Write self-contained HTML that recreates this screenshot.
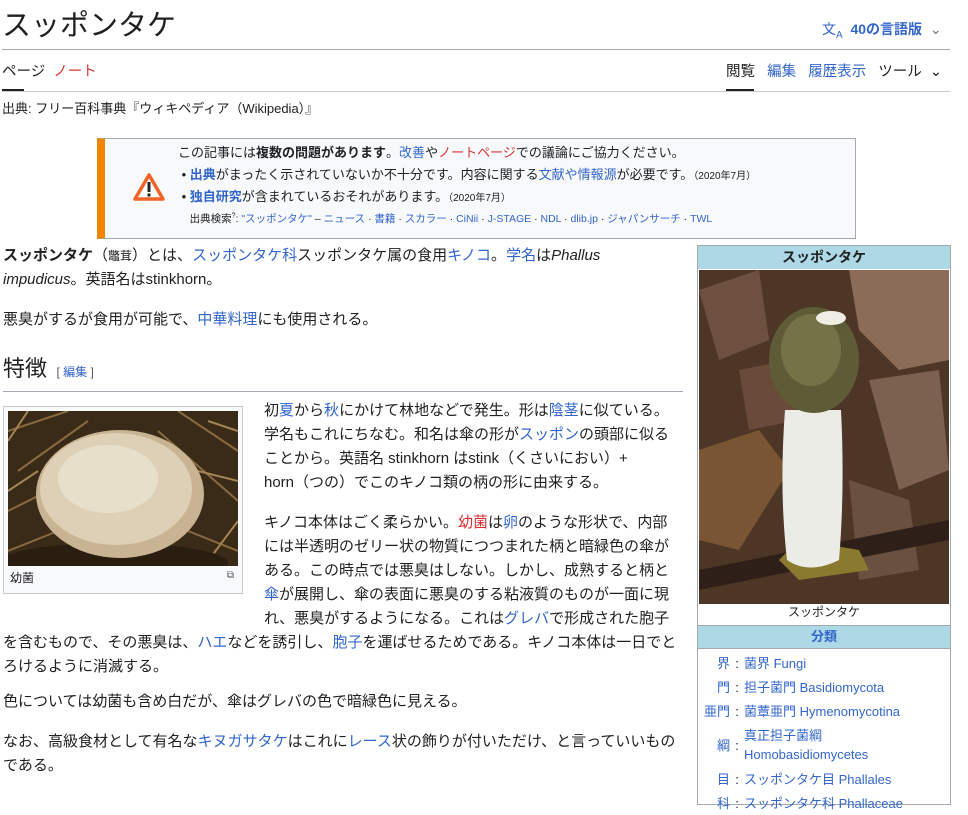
<!DOCTYPE html>
<html><head><meta charset="utf-8">
<style>
*{margin:0;padding:0;box-sizing:border-box}
body{width:968px;height:800px;overflow:hidden;background:#fff;color:#202122;font-family:"Liberation Sans","Noto Sans CJK JP",sans-serif;font-size:14px;position:relative}
a,.l{color:#3366cc;text-decoration:none}
.r{color:#d73333}
.abs{position:absolute}
.t{line-height:24px;font-size:15px;white-space:nowrap}
.ib td{font-size:13px}
.wl{height:22px;line-height:22px;white-space:nowrap}
</style></head><body>
<div class="abs" style="left:2px;top:6px;font-size:29px;line-height:40px;">スッポンタケ</div>
<div class="abs l" style="left:822px;top:19px;font-size:14px;font-weight:bold;line-height:20px;white-space:nowrap"><span style="font-weight:normal">文<sub style="font-size:10px">A</sub></span>&nbsp; 40の言語版 &nbsp;<span style="color:#72777d;font-weight:normal">⌄</span></div>
<div class="abs" style="left:2px;top:49px;width:948px;height:1px;background:#a2a9b1"></div>
<div class="abs" style="left:2px;top:62px;font-size:14.5px;line-height:20px">ページ &nbsp;<span class="r">ノート</span></div>
<div class="abs" style="left:2px;top:89px;width:22px;height:2px;background:#202122"></div>
<div class="abs" style="left:726px;top:62px;font-size:14.5px;line-height:20px;white-space:nowrap;word-spacing:0">閲覧&nbsp;&nbsp; <span class="l">編集</span>&nbsp;&nbsp; <span class="l">履歴表示</span>&nbsp;&nbsp; ツール&nbsp; <span>⌄</span></div>
<div class="abs" style="left:726px;top:89px;width:28px;height:2px;background:#202122"></div>
<div class="abs" style="left:2px;top:91px;width:948px;height:1px;background:#c8ccd1"></div>
<div class="abs" style="left:2px;top:100px;font-size:13px;line-height:18px">出典: フリー百科事典『ウィキペディア（Wikipedia）』</div>

<div class="abs" style="left:97px;top:138px;width:759px;height:101px;background:#f8f9fa;border:1px solid #a2a9b1;border-left:8px solid #f28500">
<svg class="abs" style="left:27px;top:33px" width="34" height="30" viewBox="0 0 34 30"><path d="M17 3 L31 27 L3 27 Z" fill="#fff" stroke="#f0642a" stroke-width="3.5" stroke-linejoin="round"/><rect x="15.5" y="10" width="3" height="10" fill="#202122"/><rect x="15.5" y="21.5" width="3" height="3" fill="#202122"/></svg>
<div class="abs" style="left:73px;top:3px;font-size:13px">
<div class="wl">この記事には<b>複数の問題があります</b>。<a>改善</a>や<span class="r">ノートページ</span>での議論にご協力ください。</div>
<div class="wl">&nbsp;• <b class="l">出典</b>がまったく示されていないか不十分です。内容に関する<a>文献や情報源</a>が必要です。<small style="font-size:10px">（2020年7月）</small></div>
<div class="wl">&nbsp;• <b class="l">独自研究</b>が含まれているおそれがあります。<small style="font-size:10px">（2020年7月）</small></div>
<div class="wl" style="font-size:10.5px">&nbsp;&nbsp;&nbsp;&nbsp;出典検索<sup style="font-size:7px;line-height:0">?</sup>: <a>"スッポンタケ"</a> – <a>ニュース</a> · <a>書籍</a> · <a>スカラー</a> · <a>CiNii</a> · <a>J-STAGE</a> · <a>NDL</a> · <a>dlib.jp</a> · <a>ジャパンサーチ</a> · <a>TWL</a></div>
</div>
</div>

<div class="abs t" style="left:3px;top:244px"><b>スッポンタケ</b>（<span style="font-size:12px">鼈茸</span>）とは、<a>スッポンタケ科</a>スッポンタケ属の食用<a>キノコ</a>。<a>学名</a>は<i>Phallus</i><br><i>impudicus</i>。英語名はstinkhorn。</div>
<div class="abs t" style="left:3px;top:308px">悪臭がするが食用が可能で、<a>中華料理</a>にも使用される。</div>
<div class="abs" style="left:3px;top:354px;font-size:22px;line-height:30px">特徴 <span style="font-size:12px;color:#54595d">&nbsp;[ <a>編集</a> ]</span></div>
<div class="abs" style="left:3px;top:391px;width:680px;height:1px;background:#a2a9b1"></div>

<div class="abs" style="left:3px;top:406px;width:240px;height:188px;border:1px solid #c8ccd1;background:#f8f9fa">
<svg class="abs" style="left:4px;top:4px" width="230" height="155" viewBox="0 0 230 155">
<rect width="230" height="155" fill="#3a2a18"/>
<g stroke-width="2">
<path d="M0 20 L60 0 M10 60 L80 10 M170 0 L230 40 M150 20 L230 90 M0 100 L40 80 M180 120 L230 140 M0 140 L50 120" stroke="#8a6a40"/>
<path d="M20 0 L0 30 M200 10 L230 20 M190 60 L230 70 M0 80 L30 60 M200 150 L230 110" stroke="#a58555"/>
</g>
<ellipse cx="105" cy="152" rx="115" ry="20" fill="#2a1e10"/>
<ellipse cx="112" cy="83" rx="84" ry="64" fill="#c8b493"/>
<ellipse cx="108" cy="78" rx="76" ry="56" fill="#ddd0b6"/>
<ellipse cx="100" cy="68" rx="50" ry="34" fill="#e8dfcb"/>
</svg>
<div class="abs" style="left:6px;top:162px;font-size:12px;line-height:18px">幼菌</div>
<div class="abs" style="right:8px;top:163px;font-size:10px;color:#54595d">⧉</div>
</div>

<div class="abs t" style="left:264px;top:399px">初<a>夏</a>から<a>秋</a>にかけて林地などで発生。形は<a>陰茎</a>に似ている。<br>学名もこれにちなむ。和名は傘の形が<a>スッポン</a>の頭部に似る<br>ことから。英語名 stinkhorn はstink（くさいにおい）+<br>horn（つの）でこのキノコ類の柄の形に由来する。</div>
<div class="abs t" style="left:264px;top:511px">キノコ本体はごく柔らかい。<span class="r">幼菌</span>は<a>卵</a>のような形状で、内部<br>には半透明のゼリー状の物質につつまれた柄と暗緑色の傘が<br>ある。この時点では悪臭はしない。しかし、成熟すると柄と<br><a>傘</a>が展開し、傘の表面に悪臭のする粘液質のものが一面に現<br>れ、悪臭がするようになる。これは<a>グレバ</a>で形成された胞子</div>
<div class="abs t" style="left:3px;top:631px">を含むもので、その悪臭は、<a>ハエ</a>などを誘引し、<a>胞子</a>を運ばせるためである。キノコ本体は一日でと<br>ろけるように消滅する。</div>
<div class="abs t" style="left:3px;top:690px">色については幼菌も含め白だが、傘はグレバの色で暗緑色に見える。</div>
<div class="abs t" style="left:3px;top:730px">なお、高級食材として有名な<a>キヌガサタケ</a>はこれに<a>レース</a>状の飾りが付いただけ、と言っていいもの<br>である。</div>

<div class="abs ib" style="left:697px;top:245px;width:254px;height:560px;border:1px solid #a2a9b1;background:#fff">
<div style="background:#add8e6;height:23px;text-align:center;font-weight:bold;font-size:14px;line-height:23px">スッポンタケ</div>
<svg class="abs" style="left:1px;top:24px" width="250" height="334" viewBox="0 0 250 334">
<rect width="250" height="334" fill="#4e3626"/>
<path d="M150 0 L250 0 L250 90 L200 100 L160 60 Z" fill="#8a6c58"/>
<path d="M0 20 L60 0 L70 70 L20 90 Z" fill="#6e5040"/>
<path d="M0 180 L60 160 L90 200 L40 280 L0 270 Z" fill="#7a5534"/>
<path d="M170 110 L240 100 L250 200 L200 220 Z" fill="#7c6050"/>
<path d="M150 210 L210 230 L220 300 L160 310 Z" fill="#6a5040"/>
<path d="M40 100 L90 90 L100 150 L50 160 Z" fill="#6a4a38"/>
<path d="M0 300 L250 250 L250 270 L0 320 Z" fill="#2e2018"/>
<path d="M80 290 L100 270 L160 280 L170 300 L100 310 Z" fill="#8a7a30"/>
<path d="M86 140 Q80 220 88 290 Q110 305 140 290 Q146 220 142 140 Z" fill="#ecece6"/>
<ellipse cx="115" cy="90" rx="45" ry="53" fill="#5e5c36"/>
<ellipse cx="112" cy="80" rx="30" ry="36" fill="#747246"/>
<ellipse cx="132" cy="48" rx="15" ry="7" fill="#f0ede4"/>
</svg>
<div class="abs" style="left:0;top:358px;width:252px;text-align:center;font-size:12px;line-height:17px">スッポンタケ</div>
<div class="abs" style="left:0;top:379px;width:252px;height:24px;background:#add8e6;border-top:1px solid #a2a9b1;border-bottom:1px solid #a2a9b1;text-align:center;font-weight:bold;font-size:13px;line-height:22px" ><a>分類</a></div>
<table class="abs" style="left:2px;top:405px;border-collapse:collapse;line-height:19px">
<tr style="height:24px"><td style="text-align:right;width:30px" class="l">界</td><td style="width:14px;text-align:center">:</td><td class="l">菌界 Fungi</td></tr>
<tr style="height:24px"><td style="text-align:right" class="l">門</td><td style="text-align:center">:</td><td class="l">担子菌門 Basidiomycota</td></tr>
<tr style="height:24px"><td style="text-align:right" class="l">亜門</td><td style="text-align:center">:</td><td class="l">菌蕈亜門 Hymenomycotina</td></tr>
<tr style="height:44px"><td style="text-align:right" class="l">綱</td><td style="text-align:center">:</td><td class="l">真正担子菌綱<br>Homobasidiomycetes</td></tr>
<tr style="height:24px"><td style="text-align:right" class="l">目</td><td style="text-align:center">:</td><td class="l">スッポンタケ目 Phallales</td></tr>
<tr style="height:24px"><td style="text-align:right" class="l">科</td><td style="text-align:center">:</td><td class="l">スッポンタケ科 Phallaceae</td></tr>
</table>
</div>
</body></html>
